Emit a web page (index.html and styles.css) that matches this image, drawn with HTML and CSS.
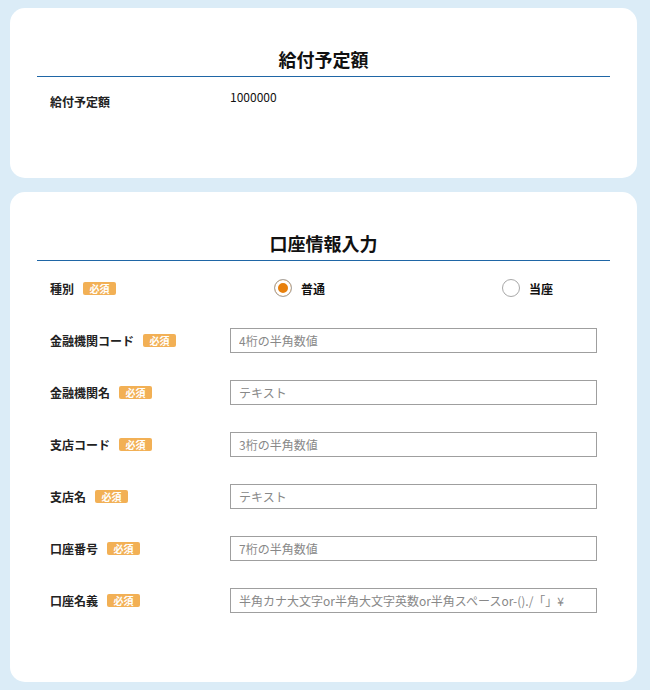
FILE: index.html
```html
<!DOCTYPE html>
<html lang="ja">
<head>
  <meta charset="UTF-8" />
  <meta name="viewport" content="width=device-width, initial-scale=1.0"/>
  <title>口座情報入力</title>
  <link rel="stylesheet" href="styles.css">
</head>
<body>

<div class="page">

  <section class="card">
    <h2 class="card-title">給付予定額</h2>
    <div class="info-row">
      <div class="info-label">給付予定額</div>
      <div class="info-value">1000000</div>
    </div>
  </section>

  <section class="card card-form">
    <h2 class="card-title">口座情報入力</h2>

    <div class="form-row">
      <div class="form-label">種別<span class="badge">必須</span></div>
      <div class="radio-group">
        <label class="radio-option">
          <span class="radio checked"></span>普通
        </label>
        <label class="radio-option">
          <span class="radio"></span>当座
        </label>
      </div>
    </div>

    <div class="form-row">
      <label class="form-label" for="bankCode">金融機関コード<span class="badge">必須</span></label>
      <input type="text" id="bankCode" placeholder="4桁の半角数値" />
    </div>

    <div class="form-row">
      <label class="form-label" for="bankName">金融機関名<span class="badge">必須</span></label>
      <input type="text" id="bankName" placeholder="テキスト" />
    </div>

    <div class="form-row">
      <label class="form-label" for="branchCode">支店コード<span class="badge">必須</span></label>
      <input type="text" id="branchCode" placeholder="3桁の半角数値" />
    </div>

    <div class="form-row">
      <label class="form-label" for="branchName">支店名<span class="badge">必須</span></label>
      <input type="text" id="branchName" placeholder="テキスト" />
    </div>

    <div class="form-row">
      <label class="form-label" for="accountNo">口座番号<span class="badge">必須</span></label>
      <input type="text" id="accountNo" placeholder="7桁の半角数値" />
    </div>

    <div class="form-row">
      <label class="form-label" for="accountName">口座名義<span class="badge">必須</span></label>
      <input type="text" id="accountName" placeholder="半角カナ大文字or半角大文字英数or半角スペースor-()./「」¥" />
    </div>
  </section>

</div>

</body>
</html>
```

FILE: styles.css
```css
body {
  font-family: "Noto Sans CJK JP", "Noto Sans", sans-serif;
  margin: 0;
  background: #dbecf7;
  color: #222;
}

.page {
  padding: 8px 13px 8px 10px;
  display: flex;
  flex-direction: column;
  gap: 14px;
}

.card {
  background: white;
  border-radius: 15px;
  padding: 38px 27px 0;
  height: 170px;
  box-sizing: border-box;
}

.card-form {
  height: 490px;
}

.card-title {
  margin: 0;
  font-size: 18px;
  line-height: 26px;
  font-weight: bold;
  text-align: center;
  color: #111;
  padding-bottom: 4px;
  border-bottom: 1px solid #1f66a6;
}

.info-row {
  display: flex;
  padding: 0 13px;
  margin-top: 11px;
  font-size: 12px;
  line-height: 18px;
}

.info-label {
  width: 180px;
  font-weight: bold;
  padding-top: 5px;
}

.info-value {
  color: #111;
}

.form-row {
  display: flex;
  align-items: center;
  min-height: 26px;
  padding: 0 13px;
  margin-top: 26px;
}

.card-title + .form-row {
  margin-top: 14px;
}

.form-label {
  width: 180px;
  flex-shrink: 0;
  font-size: 12px;
  font-weight: bold;
  display: flex;
  align-items: center;
}

.badge {
  display: inline-block;
  margin-left: 9px;
  width: 33px;
  height: 13px;
  line-height: 13px;
  border-radius: 2px;
  background: #f2b055;
  color: white;
  font-size: 10px;
  font-weight: bold;
  text-align: center;
}

.radio-group {
  flex: 1;
  display: flex;
  padding-left: 44px;
}

.radio-option {
  width: 228px;
  display: flex;
  align-items: center;
  font-size: 12px;
  font-weight: bold;
  color: #111;
}

.radio-option:last-child {
  width: auto;
}

.radio {
  width: 16px;
  height: 16px;
  border: 1px solid #a8a8a8;
  border-radius: 50%;
  margin-right: 9px;
  background: white;
}

.radio.checked {
  background: #e8800c;
  box-shadow: inset 0 0 0 3px white;
}

input {
  flex: 1;
  min-width: 0;
  height: 25px;
  box-sizing: border-box;
  border: 1px solid #9f9f9f;
  padding: 0 8px;
  font-family: inherit;
  font-size: 12px;
  color: #333;
  outline: none;
}

input::placeholder {
  color: #888;
}
```
